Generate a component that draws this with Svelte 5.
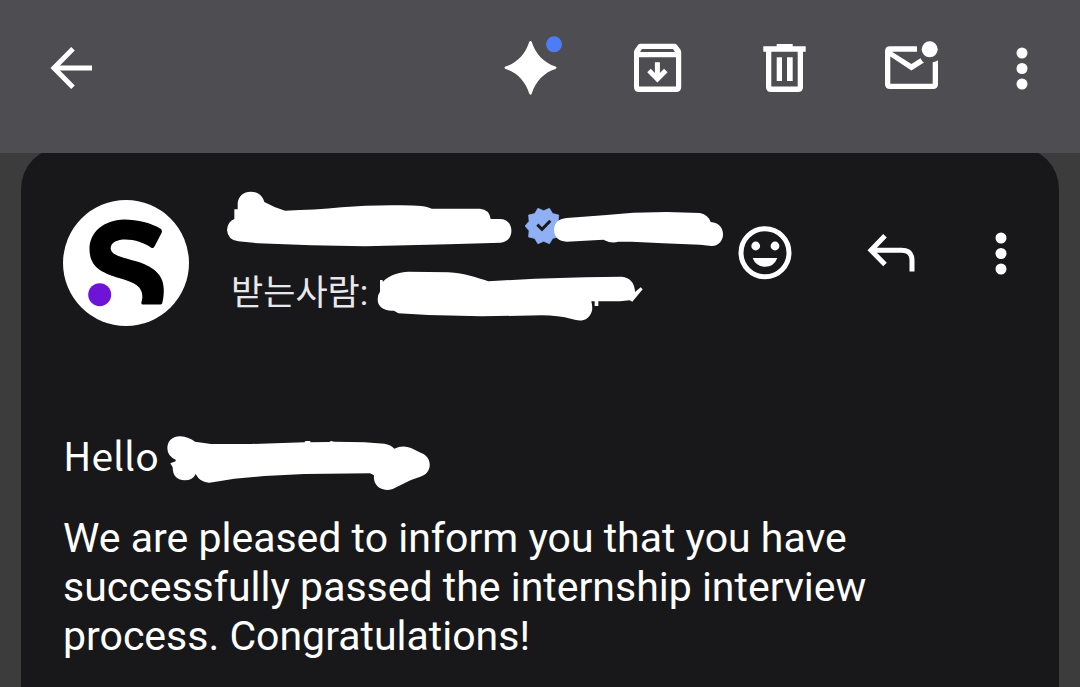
<script>
    // ten pointed seal behind the check mark
    const seal = [];
    for (let i = 0; i < 20; i++) {
        const r = i % 2 ? 46 : 56;
        const a = Math.PI + (i * Math.PI) / 10;
        seal.push(`${131 + r * Math.cos(a)},${108 + r * Math.sin(a)}`);
    }
    const sealPoints = seal.join(" ");
</script>

{#snippet dots()}
    <svg width="32" height="64" viewBox="0 0 32 64">
        <circle cx="16" cy="17" r="5.5" />
        <circle cx="16" cy="32.5" r="5.5" />
        <circle cx="16" cy="48" r="5.5" />
    </svg>
{/snippet}

<div class="mail">
    <header class="toolbar">
        <button type="button" aria-label="Back">
            <svg width="64" height="64" viewBox="0 0 64 64">
                <path class="line" d="M53 32H15M34 12.8L15 32L34 51.2" />
            </svg>
        </button>
        <div class="tools">
            <button type="button" aria-label="Gemini">
                <svg width="64" height="64" viewBox="0 0 64 64">
                    <path d="M31.3 5.8Q32.5 4 33.7 5.8C37.5 18 46 27 57.5 30.6Q59.5 31.8 57.5 33C46 36.5 37.5 45.5 33.7 57.8Q32.5 59.5 31.3 57.8C27.5 45.500 19 36.5 7.500 33Q5.500 31.8 7.500 30.6C19 27 27.5 18 31.3 5.8Z" />
                    <circle class="new" cx="56" cy="8.3" r="8" />
                </svg>
            </button>
            <button type="button" aria-label="Archive">
                <svg width="64" height="64" viewBox="0 0 64 64">
                    <path fill-rule="evenodd" d="M15.5 7.8H49.5Q51 7.8 52 9L55 13Q56.2 14.5 56.2 16V51Q56.2 56 51 56H14Q9 56 9 51V16Q9 14.5 10.2 13L13 9Q14 7.8 15.5 7.8ZM17 13L15 16H50L48 13ZM14 21.3V50.5H51V21.3Z" />
                    <path class="line" d="M32.4 26.3V43M24 34.5L32.4 42.9L40.8 34.5" />
                </svg>
            </button>
            <button type="button" aria-label="Delete">
                <svg width="64" height="64" viewBox="0 0 64 64">
                    <path fill-rule="evenodd" d="M24.7 8H40.7V10.3H53.7V15.7H51V51Q51 56 46 56H19Q14 56 14 51V15.7H11.3V10.3H24.7ZM19.3 15.7V50.4H45.7V15.7Z" />
                    <path d="M24.7 21.3H30V45H24.7ZM35 21.3H40.7V45H35Z" />
                </svg>
            </button>
            <button type="button" aria-label="Mark as unread">
                <svg width="64" height="64" viewBox="0 0 64 64">
                    <path d="M38 10.3V15.7H13L32.4 28L41.5 22.3Q42.5 25 45 26.5L32.4 34.5L11.3 20.5V47.7H53.7V26.3Q57 26 59 24.3V48Q59 53 54 53H11Q6 53 6 48V15.5Q6 10.3 11 10.3Z" />
                    <circle cx="50.7" cy="13.3" r="8" />
                </svg>
            </button>
            <button type="button" aria-label="More options">{@render dots()}</button>
        </div>
    </header>

    <main class="card">
        <section class="head">
            <svg class="avatar" width="126" height="126" viewBox="0 0 126 126">
                <circle cx="63" cy="63" r="63" fill="#fff" />
                <path fill="#000" d="M98 29C88 23 75 19.5 61 19.5C41 20 26.5 32 26.5 49C26.5 68 40 73 56 78C73 83 80 87 79.3 98L78.3 103Q78.3 104.5 80 104.5H97Q99 104.5 99.3 103C100.3 99 101 94 100.7 88C100 73 88 66 74 61.5C58 57 48 55 47.7 48.5C47.7 42 55 39.5 62 39.5C72 39.5 81 43 88 47.5Q90 49 91.5 46.5L98.5 33Q99.5 30.5 98 29Z" />
                <circle cx="36.7" cy="94.7" r="11.5" fill="#6d14d8" />
            </svg>

            <div class="sender">
                <div class="row">
                    <svg width="298" height="60" viewBox="36 30 894 180">
                        <path d="M36 150Q37 126 58 117V88H68V70C70 48 86 35 107 35C128 35 144 48 148 66Q180 84 210 92Q300 90 380 82Q450 76 530 76Q630 74 650 86H795Q823 88 827 117H857C900 119 900 186 857 188L700 193L450 199L290 196L130 190L70 184Q38 180 36 150Z" />
                    </svg>
                    <svg width="37" height="60" viewBox="75 0 111 180">
                        <polygon class="seal" points={sealPoints} />
                        <path class="check" d="M112 104L126 118L151 92" />
                    </svg>
                    <svg class="over" width="170" height="60" viewBox="162 0 510 180">
                        <path d="M162 120C163 96 178 86 200 84L320 75L400 68L500 66L600 69Q625 75 632 96C682 98 680 167 635 168L600 164L490 160L395 155L355 155Q335 162 310 149L200 155Q164 153 162 120Z" />
                    </svg>
                </div>
                <div class="row">
                    <span class="to">받는사람:</span>
                    <svg width="267" height="60" viewBox="486 18 801 180">
                        <path d="M488 118Q488 103 495 95V60H503V66C525 42 555 37 580 35L700 37C750 40 785 53 820 64L960 56L1110 52L1220 50C1245 52 1260 70 1260 96L1277 82L1283 88L1252 125L1244 121L1215 124H1150V138H1139V124H1129Q1134 145 1130 155C1120 182 1098 186 1070 177Q1030 166 980 166L800 169L640 165L550 160L537 152C505 154 488 140 488 118Z" />
                    </svg>
                </div>
            </div>

            <div class="actions">
                <button type="button" aria-label="Add reaction">
                    <svg width="64" height="64" viewBox="0 0 64 64">
                        <circle class="line" cx="32" cy="31.7" r="24" />
                        <circle cx="22.7" cy="25" r="4.4" />
                        <circle cx="42" cy="25" r="4.4" />
                        <path d="M19.7 37H44.3Q41 45.7 32 45.7T19.7 37Z" />
                    </svg>
                </button>
                <button type="button" aria-label="Reply">
                    <svg width="64" height="64" viewBox="0 0 64 64">
                        <path class="line" d="M26 14.8L12 29.2L26 43.6M12 29.2H42.5Q53 29.2 53 39.5V50.5" />
                    </svg>
                </button>
                <button type="button" aria-label="More options">{@render dots()}</button>
            </div>
        </section>

        <article>
            <p class="hello">
                <span>Hello</span>
                <svg width="265" height="56" viewBox="348 45 795 168">
                    <path d="M349 84C350 60 368 48 388 49C405 50 420 56 432 65L480 72L600 72L760 67L764 63H778V67L835 66L840 63L850 65L940 67L1000 71Q1020 74 1030 86Q1055 74 1080 84L1112 100C1145 112 1145 160 1108 170L1080 180L1025 207C990 218 965 195 969 166L957 160L760 162L640 168L550 176L485 187Q450 193 434 162Q425 181 402 181C375 180 365 165 365 142L358 130L374 124V119Q349 108 349 84Z" />
                </svg>
            </p>
            <p>We are pleased to inform you that you have successfully passed the internship interview process. Congratulations!</p>
        </article>
    </main>
</div>

<style>
    :global(body) {
        margin: 0;
        background: #3c3c3d;
    }

    .mail {
        display: flex;
        flex-direction: column;
        min-height: 100vh;
        color: #fff;
        font-family: Roboto, "Noto Sans CJK KR", sans-serif;
    }

    svg {
        display: block;
        flex: none;
        fill: #fff;
    }

    button {
        padding: 0;
        border: 0;
        background: none;
        cursor: pointer;
    }

    .line {
        fill: none;
        stroke: #fff;
        stroke-width: 5;
    }

    .new {
        fill: #4c7df4;
    }

    .toolbar {
        position: relative;
        z-index: 1;
        display: flex;
        justify-content: space-between;
        padding: 36px 42px 53px 39px;
        background: #4e4d52;
    }

    .tools {
        display: flex;
        gap: 63px;
    }

    .card {
        flex: 1;
        margin: -6px 21px 0;
        padding: 43px 42px 24px;
        border-radius: 42px 42px 0 0;
        background: #18181a;
    }

    .head {
        display: flex;
        align-items: flex-start;
    }

    .avatar {
        margin-top: 10px;
    }

    .sender {
        display: flex;
        flex: 1;
        flex-direction: column;
        gap: 16px;
        min-width: 0;
        margin-left: 38px;
    }

    .row {
        display: flex;
    }

    .over {
        margin-left: -8px;
    }

    .seal {
        fill: #8fb0f4;
        stroke: #8fb0f4;
        stroke-width: 2;
        stroke-linejoin: round;
    }

    .check {
        fill: none;
        stroke: #18181a;
        stroke-width: 9;
    }

    .to {
        width: 150px;
        padding-left: 4px;
        box-sizing: border-box;
        color: #e8e8ec;
        font-size: 35px;
        line-height: 56px;
        white-space: nowrap;
    }

    .actions {
        display: flex;
        gap: 62px;
        margin-top: 31px;
    }

    article {
        margin-top: 105px;
        font-size: 41px;
        line-height: 49px;
    }

    p {
        margin: 0;
    }

    .hello {
        display: flex;
        gap: 8px;
        margin-bottom: 23px;
        font-family: "Noto Sans CJK KR", sans-serif;
        font-size: 39px;
        line-height: 46px;
    }

    .hello svg {
        margin-top: 4px;
    }
</style>
